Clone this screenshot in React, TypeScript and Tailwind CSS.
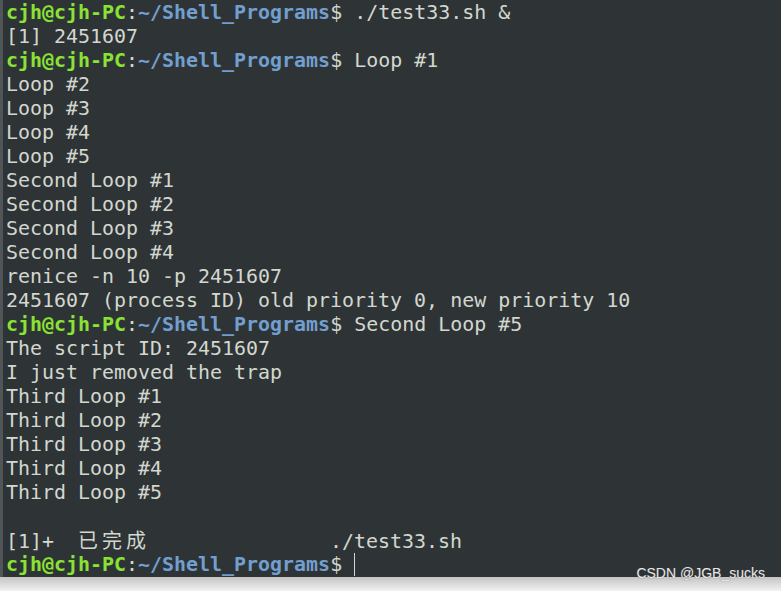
import React from "react";

type Line = { prompt?: boolean; text: string };

const lines: Line[] = [
  { prompt: true, text: " ./test33.sh &" },
  { text: "[1] 2451607" },
  { prompt: true, text: " Loop #1" },
  { text: "Loop #2" },
  { text: "Loop #3" },
  { text: "Loop #4" },
  { text: "Loop #5" },
  { text: "Second Loop #1" },
  { text: "Second Loop #2" },
  { text: "Second Loop #3" },
  { text: "Second Loop #4" },
  { text: "renice -n 10 -p 2451607" },
  { text: "2451607 (process ID) old priority 0, new priority 10" },
  { prompt: true, text: " Second Loop #5" },
  { text: "The script ID: 2451607" },
  { text: "I just removed the trap" },
  { text: "Third Loop #1" },
  { text: "Third Loop #2" },
  { text: "Third Loop #3" },
  { text: "Third Loop #4" },
  { text: "Third Loop #5" },
  { text: "" },
];

const Prompt = () => (
  <>
    <span className="font-bold text-[#8ae234]">cjh@cjh-PC</span>
    <span>:</span>
    <span className="font-bold text-[#729fcf]">~/Shell_Programs</span>
    <span>$</span>
  </>
);

// CJK glyphs take two cells in the terminal grid
const Wide = ({ ch }: { ch: string }) => (
  <span className="inline-block w-[24px] font-['Noto_Sans_CJK_SC',sans-serif]">{ch}</span>
);

export default function App() {
  return (
    <div className="relative w-[781px] h-[591px] overflow-hidden bg-[#f2f2f2]">
      <div className="h-[577px] overflow-hidden bg-[#2e3436] border-l-[3px] border-[#505558] pl-[3px] text-[19.95px] leading-[24px] text-[#d3d7cf] font-['DejaVu_Sans_Mono',monospace] whitespace-pre">
        {lines.map((l, i) => (
          <div key={i} className="h-[24px]">
            {l.prompt && <Prompt />}
            {l.text}
          </div>
        ))}
        <div className="h-[24px]">
          {"[1]+  "}
          <Wide ch="已" />
          <Wide ch="完" />
          <Wide ch="成" />
          {"               ./test33.sh"}
        </div>
        <div className="h-[24px] flex items-center">
          <Prompt />
          <span> </span>
          <span className="w-px h-[23px] bg-[#d3d7cf]" />
        </div>
      </div>
      <div className="h-[14px] bg-gradient-to-b from-[#c4c4c4] to-[#f2f2f2]" />

      {/* watermark */}
      <div className="absolute right-[16px] top-[565px] text-[14px] leading-[16px] text-[#e6e6e6] font-['Liberation_Sans',sans-serif] [text-shadow:0_0_1px_#555]">
        CSDN @JGB_sucks
      </div>
    </div>
  );
}
